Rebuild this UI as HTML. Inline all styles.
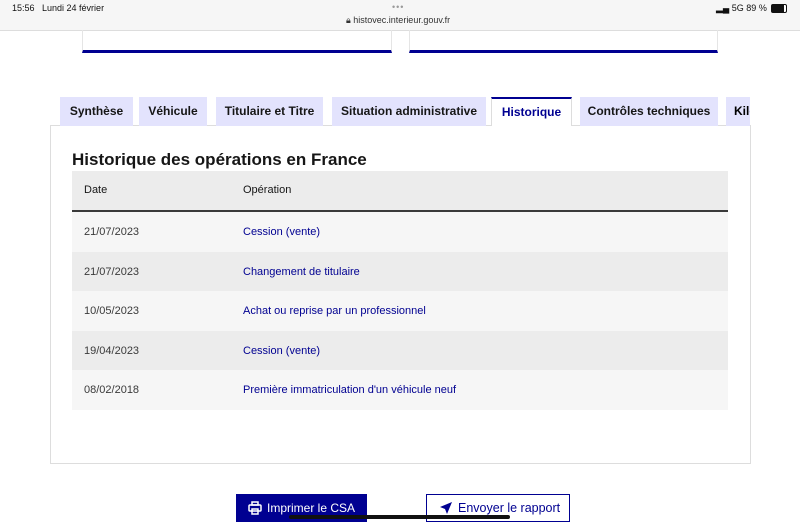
<!DOCTYPE html>
<html><head><meta charset="utf-8"><style>
body{margin:0;width:800px;height:525px;overflow:hidden;background:#fff;font-family:"Liberation Sans",sans-serif;position:relative}
.abs{position:absolute}
.bar{left:0;top:0;width:800px;height:30px;background:#f6f6f6;border-bottom:1px solid #ddd}
.card{top:30px;height:20px;border:1px solid #e5e5e5;border-top:none;border-bottom:3px solid #000091}
.tab{top:97px;height:29px;background:#e3e3fd;font-size:12px;font-weight:bold;color:#161616;line-height:29px;text-align:center}
.row{left:72px;width:656px;height:40px;font-size:11px;color:#3a3a3a;line-height:40px}
.row span{position:absolute;left:12px}
.row a{position:absolute;left:171px;color:#000091;text-decoration:none}
</style></head><body>
<div class="abs bar"></div>
<div class="abs" style="left:12px;top:3px;font-size:9px;color:#111">15:56&nbsp;&nbsp; Lundi 24 février</div>
<div class="abs" style="left:392px;top:2px;font-size:9px;color:#999;letter-spacing:1px">•••</div>
<div class="abs" style="left:346px;top:15px;font-size:9px;color:#333">🔒︎ histovec.interieur.gouv.fr</div>
<div class="abs" style="left:716px;top:3px;font-size:9px;color:#111">▂▄ 5G 89 %</div>
<div class="abs" style="left:771px;top:4px;width:14px;height:7px;border:1px solid #111;border-radius:2px;background:linear-gradient(90deg,#111 85%,#fff 85%)"></div>
<div class="abs card" style="left:82px;width:308px"></div>
<div class="abs card" style="left:409px;width:307px"></div>
<div class="abs" style="left:50px;top:125px;width:699px;height:337px;border:1px solid #ddd"></div>
<div class="abs tab" style="left:60px;width:73px">Synthèse</div>
<div class="abs tab" style="left:139px;width:68px">Véhicule</div>
<div class="abs tab" style="left:216px;width:107px">Titulaire et Titre</div>
<div class="abs tab" style="left:332px;width:154px">Situation administrative</div>
<div class="abs tab" style="left:491px;width:81px;top:97px;height:29px;background:#fff;border-top:2px solid #000091;border-left:1px solid #ddd;border-right:1px solid #ddd;color:#000091;box-sizing:border-box;line-height:27px">Historique</div>
<div class="abs tab" style="left:580px;width:138px">Contrôles techniques</div>
<div class="abs" style="left:726px;top:97px;width:24px;height:29px;overflow:hidden;background:#e3e3fd;font-size:12px;font-weight:bold;line-height:29px;padding-left:8px;box-sizing:border-box">Kilo</div>
<div class="abs" style="left:72px;top:150px;font-size:17px;font-weight:bold;color:#161616">Historique des opérations en France</div>
<div class="abs row" style="top:171px;background:#ececec;border-bottom:2px solid #3a3a3a;height:39px;line-height:39px;color:#161616"><span>Date</span><a style="color:#161616">Opération</a></div>
<div class="abs row" style="top:212px;background:#f6f6f6"><span>21/07/2023</span><a>Cession (vente)</a></div>
<div class="abs row" style="top:252px;background:#ececec"><span>21/07/2023</span><a>Changement de titulaire</a></div>
<div class="abs row" style="top:291px;background:#f6f6f6"><span>10/05/2023</span><a>Achat ou reprise par un professionnel</a></div>
<div class="abs row" style="top:331px;background:#ececec"><span>19/04/2023</span><a>Cession (vente)</a></div>
<div class="abs row" style="top:370px;background:#f6f6f6"><span>08/02/2018</span><a>Première immatriculation d'un véhicule neuf</a></div>
<div class="abs" style="left:236px;top:494px;width:131px;height:28px;background:#000091;color:#fff;font-size:12px;line-height:28px">
<svg style="position:absolute;left:12px;top:7px" width="14" height="14" viewBox="0 0 14 14" fill="none" stroke="#fff" stroke-width="1.5"><rect x="4" y="1" width="6" height="3"/><rect x="1" y="4" width="12" height="6" rx="1"/><rect x="4" y="8" width="6" height="5"/></svg>
<span style="position:absolute;left:31px">Imprimer le CSA</span></div>
<div class="abs" style="left:426px;top:494px;width:142px;height:26px;border:1px solid #000091;color:#000091;font-size:12.5px;line-height:26px">
<svg style="position:absolute;left:12px;top:6px" width="14" height="14" viewBox="0 0 14 14"><path d="M13 1L1 6l5 2 2 5z" fill="#000091"/></svg>
<span style="position:absolute;left:31px">Envoyer le rapport</span></div>
<div class="abs" style="left:289px;top:515px;width:221px;height:4px;border-radius:2px;background:#111"></div>
</body></html>
